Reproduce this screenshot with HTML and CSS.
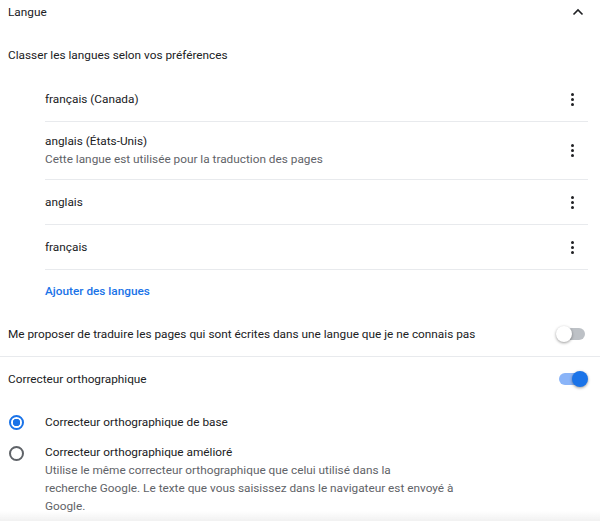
FILE: index.html
```html
<!DOCTYPE html>
<html lang="fr">
<head>
    <meta charset="UTF-8">
    <meta name="viewport" content="width=device-width, initial-scale=1.0">
    <title>Langue</title>
    <link rel="stylesheet" href="styles.css">
</head>
<body>

<section class="settings">
    <div class="section-head">
        <span>Langue</span>
        <svg class="chevron" width="12" height="8" viewBox="0 0 12 8">
            <path d="M1.5 6.5 L6 2 L10.5 6.5" fill="none" stroke="#202124" stroke-width="1.6"/>
        </svg>
    </div>

    <div class="subhead">Classer les langues selon vos préférences</div>

    <ul class="lang-list">
        <li class="lang-row">
            <div class="lang-text">français (Canada)</div>
            <span class="kebab"><i></i><i></i><i></i></span>
        </li>
        <li class="lang-row two-line">
            <div class="lang-text">
                anglais (États-Unis)
                <div class="secondary">Cette langue est utilisée pour la traduction des pages</div>
            </div>
            <span class="kebab"><i></i><i></i><i></i></span>
        </li>
        <li class="lang-row">
            <div class="lang-text">anglais</div>
            <span class="kebab"><i></i><i></i><i></i></span>
        </li>
        <li class="lang-row">
            <div class="lang-text">français</div>
            <span class="kebab"><i></i><i></i><i></i></span>
        </li>
    </ul>

    <div class="add-row"><a class="add-link">Ajouter des langues</a></div>

    <div class="toggle-row bordered">
        <span>Me proposer de traduire les pages qui sont écrites dans une langue que je ne connais pas</span>
        <span class="toggle"><span class="knob"></span></span>
    </div>

    <div class="toggle-row">
        <span>Correcteur orthographique</span>
        <span class="toggle on"><span class="knob"></span></span>
    </div>

    <div class="radio-row">
        <span class="radio checked"></span>
        <div class="radio-text">Correcteur orthographique de base</div>
    </div>
    <div class="radio-row multi">
        <span class="radio"></span>
        <div class="radio-text">
            Correcteur orthographique amélioré
            <div class="secondary">Utilise le même correcteur orthographique que celui utilisé dans la<br>
                recherche Google. Le texte que vous saisissez dans le navigateur est envoyé à<br>
                Google.</div>
        </div>
    </div>
</section>

<div class="fade"></div>

</body>
</html>
```

FILE: styles.css
```css
body {
    margin: 0;
    font-family: Roboto, "Noto Sans", Arial, sans-serif;
    font-size: 11.8px;
    line-height: 18px;
    color: #202124;
    background-color: #fff;
}
ul {
    list-style-type: none;
    margin: 0;
    padding: 0;
}
.section-head {
    display: flex;
    justify-content: space-between;
    align-items: center;
    height: 24px;
    padding: 0 16px 0 8px;
}
.chevron {
    display: block;
}
.subhead {
    margin-top: 22px;
    padding-left: 8px;
}
.lang-list {
    margin: 13px 12px 0 45px;
}
.lang-row {
    box-sizing: border-box;
    display: flex;
    align-items: center;
    justify-content: space-between;
    min-height: 45px;
    border-bottom: 1px solid #e8eaed;
}
.lang-row.two-line {
    padding: 10px 0 11px;
}
.secondary {
    color: #5f6368;
}
.kebab {
    display: flex;
    flex-direction: column;
    gap: 2px;
    margin-right: 14px;
}
.kebab i {
    display: block;
    width: 3px;
    height: 3px;
    border-radius: 50%;
    background-color: #202124;
}
.add-row {
    display: flex;
    align-items: center;
    height: 42px;
    padding-left: 45px;
}
.add-link {
    color: #1a73e8;
    font-weight: 500;
}
.toggle-row {
    display: flex;
    align-items: center;
    justify-content: space-between;
    height: 44px;
    padding: 0 15px 0 8px;
}
.toggle-row.bordered {
    border-bottom: 1px solid #e8eaed;
}
.toggle {
    position: relative;
    width: 26px;
    height: 12px;
    border-radius: 6px;
    background-color: #bdc1c6;
}
.toggle .knob {
    position: absolute;
    top: -2px;
    left: -3px;
    width: 16px;
    height: 16px;
    border-radius: 50%;
    background-color: #fff;
    box-shadow: 0 1px 3px rgba(0, 0, 0, 0.4);
}
.toggle.on {
    background-color: #8ab4f8;
}
.toggle.on .knob {
    left: auto;
    right: -3px;
    background-color: #1a73e8;
}
.radio-row {
    display: flex;
    align-items: center;
    height: 42px;
}
.radio-row.multi {
    align-items: flex-start;
    height: auto;
}
.radio {
    box-sizing: border-box;
    width: 15px;
    height: 15px;
    margin: 0 21px 0 9px;
    border: 2px solid #5f6368;
    border-radius: 50%;
    flex-shrink: 0;
}
.radio-row.multi .radio {
    margin-top: 3px;
}
.radio.checked {
    border-color: #1a73e8;
    background: radial-gradient(circle, #1a73e8 0, #1a73e8 3.5px, transparent 4px);
}
.fade {
    position: fixed;
    left: 0;
    right: 0;
    bottom: 0;
    height: 10px;
    background: linear-gradient(rgba(240, 240, 240, 0), #f1f1f1);
}
```
